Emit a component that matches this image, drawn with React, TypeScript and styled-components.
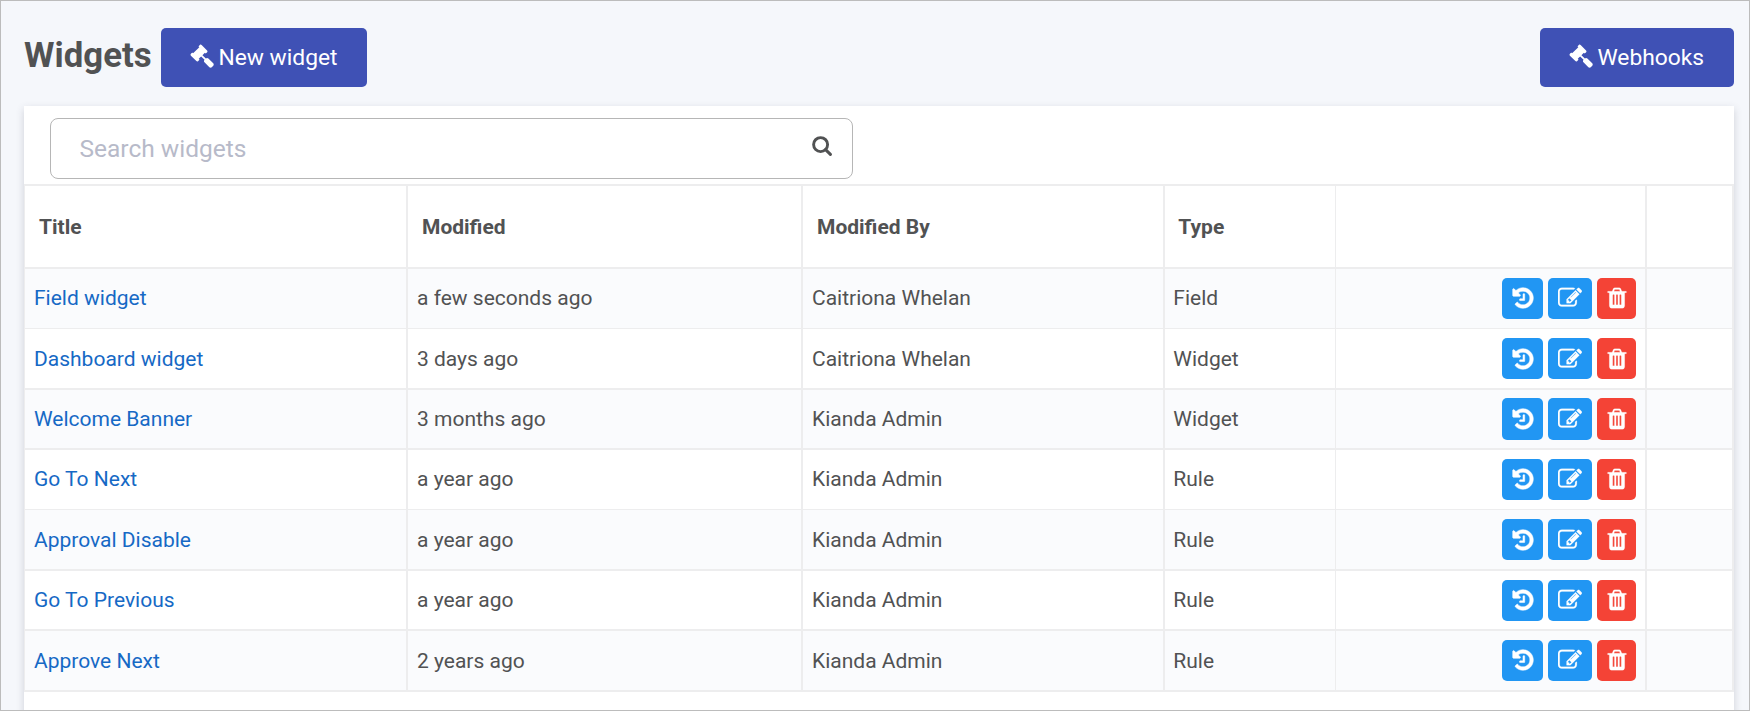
import React from 'react';
import styled, { createGlobalStyle } from 'styled-components';

const GlobalStyle = createGlobalStyle`
  *, *::before, *::after { box-sizing: border-box; }
  body { margin: 0; font-family: Roboto, "Liberation Sans", sans-serif; color: #515253; }
`;

const Page = styled.main`
  height: 711px;
  padding: 27px 15px 0 23px;
  border: 1px solid #bcbcbc;
  background: #f5f7fb;
  overflow: hidden;
`;

const Header = styled.header`
  display: flex;
  align-items: flex-start;
  height: 78px;
`;

const Heading = styled.h1`
  margin: 5px 10px 0 0;
  width: 127px;
  font-size: 34.8px;
  line-height: 44px;
  font-weight: 700;
  white-space: nowrap;
`;

const PrimaryButton = styled.button<{ $width: number; $end?: boolean }>`
  display: flex;
  align-items: center;
  width: ${p => p.$width}px;
  height: 59px;
  margin-left: ${p => (p.$end ? 'auto' : '0')};
  padding: 0 0 0 28.6px;
  gap: 4.9px;
  border: 0;
  border-radius: 5px;
  background: #3f51b5;
  color: #fff;
  font: 400 22.8px/30px Roboto, sans-serif;
  white-space: nowrap;
  svg { margin-bottom: 3px; }
`;

const Card = styled.section`
  height: 620px;
  background: #fff;
  box-shadow: 0 3px 8px rgba(60, 60, 80, 0.2);
`;

const SearchBar = styled.div`
  height: 78px;
  padding: 12px 0 0 26px;
`;

const SearchField = styled.label`
  display: flex;
  align-items: center;
  width: 803px;
  height: 61px;
  padding: 0 20px 0 28.5px;
  border: 1px solid #b6b6b6;
  border-radius: 8px;
  svg { margin-bottom: 5px; }
`;

const SearchInput = styled.input`
  flex: 1;
  min-width: 0;
  padding: 0;
  border: 0;
  outline: 0;
  font: 400 24.5px/32px Roboto, sans-serif;
  &::placeholder { color: #b7bac9; opacity: 1; }
`;

const Table = styled.div`
  border: solid #ededee;
  border-width: 2px 2px 0 1px;
`;

const Row = styled.div<{ $height: number; $line: number; $striped?: boolean; $head?: boolean }>`
  display: grid;
  grid-template-columns: 383px 395px 362px 171px 311px 1fr;
  height: ${p => p.$height}px;
  border-bottom: ${p => p.$line}px solid #ededee;
  background: ${p => (p.$striped ? '#fafbfd' : '#fff')};
  font-size: 21px;
  line-height: 31px;
  font-weight: ${p => (p.$head ? 700 : 400)};
`;

const Cell = styled.div<{ $top?: number; $line?: number; $inset?: number }>`
  padding: ${p => p.$top ?? 0}px 0 0 ${p => p.$inset ?? 9}px;
  border-right: ${p => p.$line ?? 2}px solid #ededee;
  white-space: nowrap;
`;

const HeadCell = styled(Cell)`
  display: flex;
  align-items: center;
  padding-top: 2px;
  padding-left: ${p => p.$inset ?? 14}px;
`;

const TitleLink = styled.a`
  color: #1669c5;
  text-decoration: none;
`;

const Actions = styled(Cell)`
  display: flex;
  align-items: flex-start;
  justify-content: flex-end;
  gap: 5px;
  padding-right: 9px;
`;

const ActionButton = styled.button<{ $width: number; $height: number; $top: number; $danger?: boolean }>`
  display: flex;
  align-items: flex-start;
  justify-content: center;
  width: ${p => p.$width}px;
  height: ${p => p.$height}px;
  padding: ${p => p.$top}px 0 0;
  border: 0;
  border-radius: 5px;
  background: ${p => (p.$danger ? '#f44336' : '#2196f3')};
  color: #fff;
`;

const GLYPHS = {
  gavel: 'M1771 1536q0 53-37 90l-107 108q-39 37-91 37-53 0-90-37l-363-364q-38-36-38-90 0-53 43-96l-256-256-126 126q-14 14-34 14t-34-14q2 2 12.5 12t12.5 13 10 11.5 10 13.5 6 13.5 5.5 16.5 1.5 18q0 38-28 68-3 3-16.5 18t-19 20.5-18.5 16.5-22 15.5-22 9-26 4.5q-40 0-68-28l-408-408q-28-28-28-68 0-13 4.5-26t9-22 15.5-22 16.5-18.5 20.5-19 18-16.5q30-28 68-28 10 0 18 1.5t16.5 5.5 13.5 6 13.5 10 11.5 10 13 12.5 12 12.5q-14-14-14-34t14-34l348-348q14-14 34-14t34 14q-2-2-12.5-12t-12.5-13-10-11.5-10-13.5-6-13.5-5.5-16.5-1.5-18q0-38 28-68 3-3 16.5-18t19-20.5 18.5-16.5 22-15.5 22-9 26-4.5q40 0 68 28l408 408q28 28 28 68 0 13-4.5 26t-9 22-15.5 22-16.5 18.5-20.5 19-18 16.5q-30 28-68 28-10 0-18-1.5t-16.5-5.5-13.5-6-13.5-10-11.5-10-13-12.5-12-12.5q14 14 14 34t-14 34l-126 126 256 256q43-43 96-43 52 0 91 37l363 363q37 39 37 91z',
  history: 'M1664 896q0 156-61 298t-164 245-245 164-298 61q-172 0-327-72.5t-264-204.5q-7-10-6.5-22.5t8.5-20.5l137-138q10-9 25-9 16 2 23 12 73 95 179 147t225 52q104 0 198.5-40.5t163.5-109.5 109.5-163.5 40.5-198.5-40.5-198.5-109.5-163.5-163.5-109.5-198.5-40.5q-98 0-188 35.5t-160 101.5l137 138q31 30 14 69-17 40-59 40h-448q-26 0-45-19t-19-45v-448q0-42 40-59 39-17 69 14l130 129q107-101 244.5-156.5t284.5-55.5q156 0 298 61t245 164 164 245 61 298zm-640-288v448q0 14-9 23t-23 9h-320q-14 0-23-9t-9-23v-64q0-14 9-23t23-9h224v-352q0-14 9-23t23-9h64q14 0 23 9t9 23z',
  edit: 'M888 1184l116-116-152-152-116 116v56h96v96h56zm440-720q-16-16-33 1l-350 350q-17 17-1 33t33-1l350-350q17-17 1-33zm80 594v190q0 119-84.5 203.5t-203.5 84.5h-832q-119 0-203.5-84.5t-84.5-203.5v-832q0-119 84.5-203.5t203.5-84.5h832q63 0 117 25 15 7 18 23 3 17-9 29l-49 49q-14 14-32 8-23-6-45-6h-832q-66 0-113 47t-47 113v832q0 66 47 113t113 47h832q66 0 113-47t47-113v-126q0-13 9-22l64-64q15-15 35-7t20 29zm-96-738l288 288-672 672h-288v-288zm444 132l-92 92-288-288 92-92q28-28 68-28t68 28l152 152q28 28 28 68t-28 68z',
  trash: 'M704 1376v-704q0-14-9-23t-23-9h-64q-14 0-23 9t-9 23v704q0 14 9 23t23 9h64q14 0 23-9t9-23zm256 0v-704q0-14-9-23t-23-9h-64q-14 0-23 9t-9 23v704q0 14 9 23t23 9h64q14 0 23-9t9-23zm256 0v-704q0-14-9-23t-23-9h-64q-14 0-23 9t-9 23v704q0 14 9 23t23 9h64q14 0 23-9t9-23zm-544-992h448l-48-117q-7-9-17-11h-317q-10 2-17 11zm928 32v64q0 14-9 23t-23 9h-96v948q0 83-47 143.5t-113 60.5h-832q-66 0-113-58.5t-47-141.5v-952h-96q-14 0-23-9t-9-23v-64q0-14 9-23t23-9h309l70-167q15-37 54-63t79-26h320q40 0 79 26t54 63l70 167h309q14 0 23 9t9 23z',
};

const Glyph = ({ name, weight = 0 }: { name: keyof typeof GLYPHS; weight?: number }) => (
  <svg width={24} height={24} viewBox="0 0 1792 1792" fill="currentColor" stroke="currentColor" strokeWidth={weight} aria-hidden="true">
    <path d={GLYPHS[name]} />
  </svg>
);

const SearchIcon = () => (
  <svg width={20} height={20} viewBox="0 0 20 20" fill="none" stroke="#515253" aria-hidden="true">
    <circle cx={8.6} cy={8.6} r={7} strokeWidth={2.9} />
    <path d="M13.6 13.6 L18.4 18.4" strokeWidth={3} strokeLinecap="round" />
  </svg>
);

const widgets = [
  { title: 'Field widget', modified: 'a few seconds ago', by: 'Caitriona Whelan', type: 'Field', height: 60, line: 1, text: 14, button: 9, icon: 19 },
  { title: 'Dashboard widget', modified: '3 days ago', by: 'Caitriona Whelan', type: 'Widget', height: 61, line: 2, text: 15, button: 9, icon: 20 },
  { title: 'Welcome Banner', modified: '3 months ago', by: 'Kianda Admin', type: 'Widget', height: 60, line: 2, text: 14, button: 8, icon: 19 },
  { title: 'Go To Next', modified: 'a year ago', by: 'Kianda Admin', type: 'Rule', height: 60, line: 1, text: 14, button: 9, icon: 19 },
  { title: 'Approval Disable', modified: 'a year ago', by: 'Kianda Admin', type: 'Rule', height: 61, line: 2, text: 15, button: 9, icon: 20 },
  { title: 'Go To Previous', modified: 'a year ago', by: 'Kianda Admin', type: 'Rule', height: 60, line: 2, text: 14, button: 9, icon: 19 },
  { title: 'Approve Next', modified: '2 years ago', by: 'Kianda Admin', type: 'Rule', height: 61, line: 2, text: 15, button: 9, icon: 19 },
];

export default function App() {
  return (
    <Page>
      <GlobalStyle />
      <Header>
        <Heading>Widgets</Heading>
        <PrimaryButton $width={206}><Glyph name="gavel" />New widget</PrimaryButton>
        <PrimaryButton $width={194} $end><Glyph name="gavel" />Webhooks</PrimaryButton>
      </Header>
      <Card>
        <SearchBar>
          <SearchField>
            <SearchInput placeholder="Search widgets" />
            <SearchIcon />
          </SearchField>
        </SearchBar>
        <Table>
          <Row $height={83} $line={2} $head>
            <HeadCell>Title</HeadCell>
            <HeadCell>Modified</HeadCell>
            <HeadCell>Modified By</HeadCell>
            <HeadCell $line={1} $inset={13.3}>Type</HeadCell>
            <HeadCell />
            <HeadCell $line={0} />
          </Row>
          {widgets.map((w, i) => {
            const box = { $height: w.button === 8 ? 42 : 41, $top: w.icon - w.button - 1.7 };
            return (
              <Row key={w.title} $height={w.height} $line={w.line} $striped={i % 2 === 0}>
                <Cell $top={w.text}><TitleLink href="#">{w.title}</TitleLink></Cell>
                <Cell $top={w.text}>{w.modified}</Cell>
                <Cell $top={w.text}>{w.by}</Cell>
                <Cell $top={w.text} $line={1} $inset={8.3}>{w.type}</Cell>
                <Actions $top={w.button}>
                  <ActionButton {...box} $width={41} aria-label="History"><Glyph name="history" weight={40} /></ActionButton>
                  <ActionButton {...box} $top={box.$top - 0.6} $width={44} aria-label="Edit"><Glyph name="edit" weight={16} /></ActionButton>
                  <ActionButton {...box} $width={39} $danger aria-label="Delete"><Glyph name="trash" weight={10} /></ActionButton>
                </Actions>
                <Cell $line={0} />
              </Row>
            );
          })}
        </Table>
      </Card>
    </Page>
  );
}
